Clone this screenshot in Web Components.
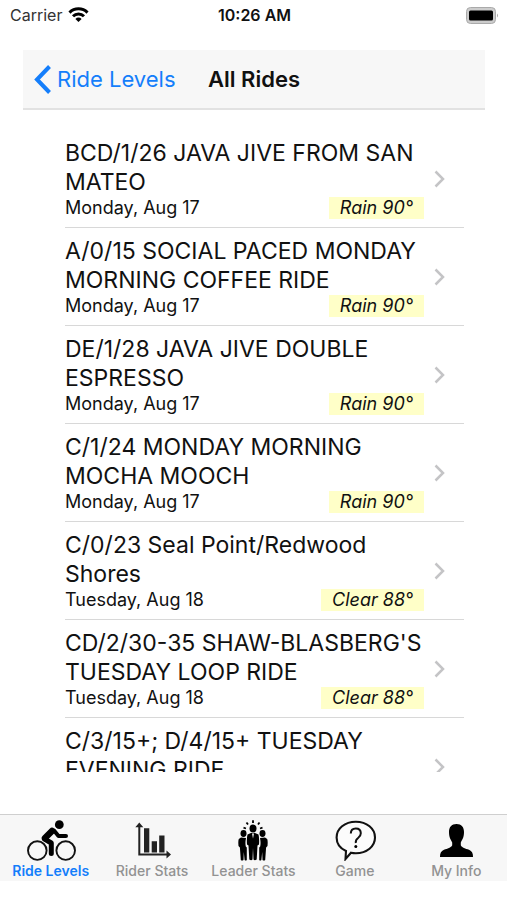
<!DOCTYPE html>
<html lang="en">
<head>
<meta charset="utf-8">
<meta name="viewport" content="width=device-width, initial-scale=1">
<title>All Rides</title>
<style>
html, body {
    height: 100%;
    margin: 0;
}
body {
    background: #fff;
    color: #111;
    font-family: Inter, Roboto, "Liberation Sans", sans-serif;
}
</style>
</head>
<body>
<ride-app>
    <status-bar slot="status" carrier="Carrier">10:26 AM</status-bar>
    <nav-header slot="header" back="Ride Levels">All Rides</nav-header>
    <ride-item date="Monday, Aug 17" weather="Rain 90°">BCD/1/26 JAVA JIVE FROM SAN MATEO</ride-item>
    <ride-item date="Monday, Aug 17" weather="Rain 90°">A/0/15 SOCIAL PACED MONDAY MORNING COFFEE RIDE</ride-item>
    <ride-item date="Monday, Aug 17" weather="Rain 90°">DE/1/28 JAVA JIVE DOUBLE ESPRESSO</ride-item>
    <ride-item date="Monday, Aug 17" weather="Rain 90°">C/1/24 MONDAY MORNING MOCHA MOOCH</ride-item>
    <ride-item date="Tuesday, Aug 18" weather="Clear 88°">C/0/23 Seal Point/Redwood Shores</ride-item>
    <ride-item date="Tuesday, Aug 18" weather="Clear 88°">CD/2/30-35 SHAW-BLASBERG'S TUESDAY LOOP RIDE</ride-item>
    <ride-item>C/3/15+; D/4/15+ TUESDAY EVENING RIDE</ride-item>
    <tab-bar slot="tabs">
        <tab-item icon="cyclist" active>Ride Levels</tab-item>
        <tab-item icon="chart">Rider Stats</tab-item>
        <tab-item icon="leaders">Leader Stats</tab-item>
        <tab-item icon="game">Game</tab-item>
        <tab-item icon="person">My Info</tab-item>
    </tab-bar>
</ride-app>

<script>
/**
 * Create a template element from a string of markup.
 */
function html(markup) {
    const template = document.createElement('template');
    template.innerHTML = markup;
    return template;
}

/**
 * Base class: attaches the shadow root and clones the template in.
 */
class BaseElement extends HTMLElement {
    constructor() {
        super();
        this.attachShadow({mode: 'open'});
        this.shadowRoot.appendChild(this.constructor.template.content.cloneNode(true));
    }

    // Copy an attribute's value to the element of the same id.
    fill(name) {
        this.shadowRoot.getElementById(name).textContent = this.getAttribute(name) || '';
    }
}

/**
 * Whole screen: status bar, header, scrolling list and tabs.
 */
class RideApp extends BaseElement {
    static template = html(`
<style>
:host {
    display: flex;
    flex-direction: column;
    box-sizing: border-box;
    height: 100vh;
    padding-bottom: 19px;
}
main {
    flex: 1;
    min-height: 0;
    margin: 20px 43px 42px 65px;
    overflow-y: auto;
    scrollbar-width: none;
}
</style>
<slot name="status"></slot>
<slot name="header"></slot>
<main><slot></slot></main>
<slot name="tabs"></slot>
`);
}

class StatusBar extends BaseElement {
    static template = html(`
<style>
:host {
    display: grid;
    grid-template-columns: 1fr auto 1fr;
    align-items: center;
    height: 30px;
    padding: 0 8px 0 10px;
    font-size: 16px;
}
.carrier {
    display: flex;
    align-items: center;
    gap: 6px;
    color: #333;
}
.time {
    font-weight: 600;
}
.battery {
    justify-self: end;
}
svg {
    display: block;
}
</style>
<span class="carrier">
    <span id="carrier"></span>
    <svg width="21" height="16" viewBox="0 0 21 16" fill="none" stroke="#000" stroke-width="3" aria-hidden="true">
        <path d="M1.5 5.6a12.7 12.7 0 0 1 18 0M5 9.2a7.7 7.7 0 0 1 11 0"/>
        <path d="M7.4 11.9a4.4 4.4 0 0 1 6.2 0L10.5 15z" fill="#000" stroke="none"/>
    </svg>
</span>
<span class="time"><slot></slot></span>
<svg class="battery" width="33" height="17" viewBox="0 0 33 17" aria-hidden="true">
    <rect x="0.5" y="0.5" width="29" height="16" rx="4" fill="#ccc" stroke="#aaa"/>
    <rect x="3" y="3.5" width="24" height="10" rx="1.5"/>
    <path d="M31 6.500q2 2 0 4z" fill="#aaa"/>
</svg>
`);

    connectedCallback() {
        this.fill('carrier');
    }
}

class NavHeader extends BaseElement {
    static template = html(`
<style>
:host {
    display: grid;
    grid-template-columns: 1fr auto 1fr;
    align-items: center;
    box-sizing: border-box;
    height: 60px;
    margin: 20px 22px 0 23px;
    padding: 0 11px;
    background: #f7f7f7;
    border-bottom: 2px solid #e2e2e2;
}
button {
    display: flex;
    align-items: center;
    gap: 6px;
    justify-self: start;
    padding: 0;
    border: 0;
    background: none;
    color: #147efb;
    font: inherit;
    font-size: 22px;
    white-space: nowrap;
    cursor: pointer;
}
h1 {
    margin: 0;
    font-size: 22px;
    font-weight: 600;
}
</style>
<button type="button">
    <svg width="17" height="29" viewBox="0 0 17 29" fill="none" stroke="currentColor" stroke-width="4" aria-hidden="true">
        <path d="M15.500 1.500 3 14.500l12.500 13"/>
    </svg>
    <span id="back"></span>
</button>
<h1><slot></slot></h1>
`);

    connectedCallback() {
        this.fill('back');
    }
}

/**
 * One ride in the list. The title is slotted.
 */
class RideItem extends BaseElement {
    static template = html(`
<style>
:host {
    display: block;
    border-bottom: 1px solid #d8d8d8;
}
a {
    display: flex;
    align-items: center;
    gap: 10px;
    padding: 9px 19px 8px 0;
    color: inherit;
    text-decoration: none;
}
.text {
    flex: 1;
    min-width: 0;
}
.title {
    font-size: 23px;
    line-height: 29px;
}
.details {
    display: flex;
    justify-content: space-between;
    height: 22px;
    font-size: 18px;
    line-height: 22px;
}
#weather {
    padding: 0 11px;
    background: #ffffc8;
    font-style: italic;
}
#weather:empty {
    display: none;
}
svg {
    flex: none;
}
</style>
<a href="#ride">
    <div class="text">
        <div class="title"><slot></slot></div>
        <div class="details"><span id="date"></span><span id="weather"></span></div>
    </div>
    <svg width="11" height="18" viewBox="0 0 11 18" fill="none" stroke="#c4c4c6" stroke-width="2.5" aria-hidden="true">
        <path d="m1.500 1.500 7.500 7.500-7.500 7.500"/>
    </svg>
</a>
`);

    connectedCallback() {
        this.fill('date');
        this.fill('weather');
    }
}

class TabBar extends BaseElement {
    static template = html(`
<style>
:host {
    display: block;
    border-top: 1px solid #cfcfcf;
    background: #f7f7f7;
}
nav {
    display: grid;
    grid-template-columns: repeat(5, 1fr);
    height: 66px;
}
</style>
<nav><slot></slot></nav>
`);
}

const ICONS = {
    cyclist: `
        <g fill="none" stroke="#111" stroke-width="1.900">
            <circle cx="12.300" cy="30.600" r="9.300"/>
            <circle cx="40.700" cy="30.600" r="9.300"/>
        </g>
        <circle cx="34.300" cy="4.700" r="4.400"/>
        <g fill="none" stroke="#000" stroke-linecap="round" stroke-linejoin="round">
            <path d="m27 11-7 7" stroke-width="6.500"/>
            <path d="m29 10.500 4.500 5.500h7.500" stroke-width="4"/>
            <path d="m19.500 19 6.800 4v10.500" stroke-width="5"/>
        </g>`,
    chart: `
        <path d="M13.300 5v29.600H42" fill="none" stroke="#222" stroke-width="2"/>
        <path d="m13.300 2.500 4 4.800h-8zM45 34.600l-4.500-4v8z" fill="#222"/>
        <path d="M18 8.300h5.300v24.300H18zM25.700 21.300H31v11.300h-5.300zM33.200 15.600h5.300v17h-5.300z" fill="#222"/>`,
    leaders: `
        <path d="m19 8.500-2.500-.8M21 4.500l-1.500-2M26 3V.3M31 4.500l1.500-2M33 8.500l2.500-.8" fill="none" stroke="#000" stroke-width="1.800"/>
        <ellipse cx="26" cy="8.500" rx="3.500" ry="3.900"/>
        <ellipse cx="16.500" cy="13.500" rx="3" ry="3.400"/>
        <ellipse cx="35.500" cy="13.500" rx="3" ry="3.400"/>
        <path d="M24 13h4l3.500 1.500q1 4 .5 10l-1.500 1-.8 14q-2 1.500-3.200 0L26 28l-.5 11.500q-1.200 1.500-3.200 0l-.8-14-1.500-1q-.5-6 .5-10z"/>
        <path d="m14 17.500 5 .5q-1 5-.2 8.500l1 1V40q-1 1.200-2.200 0l-.8-8-.3 8q-1.500 1.200-2.700 0l-.9-12.500-1.400-1.500q-.5-5 .3-7zM38 17.500l-5 .5q1 5 .2 8.500l-1 1V40q1 1.200 2.200 0l.8-8 .3 8q1.500 1.200 2.700 0l.9-12.500 1.400-1.500q.5-5-.3-7z"/>
        <path d="m25 13.500 1 5 1-5z" fill="#f7f7f7"/>`,
    game: `
        <path d="M26.800 1.800c11 0 19.200 6.800 19.200 15.700S37.800 33.200 26.800 33.200q-2.500 0-4.800-.5l-5.500 6.300.5-8C11 28.300 7.600 23.500 7.600 17.500c0-8.900 8.200-15.700 19.200-15.700z" fill="#fcfcfc" stroke="#111" stroke-width="2.100"/>
        <path d="M21.800 13.500q0-5 5-5t5 4.800q0 2.800-2.700 4.700t-2.300 5" fill="none" stroke="#111" stroke-width="2"/>
        <circle cx="26.800" cy="26.400" r="1.500"/>`,
    person: `
        <path d="M26.500 4c5 0 7.500 3.200 7.500 8 0 6-2 7.500-3.200 10.500v2.700c1.200 2.600 4.700 3.200 8.200 4.600 3.200 1.300 4 3.700 4 7.200H10c0-3.500.8-5.900 4-7.200 3.500-1.400 7-2 8.200-4.600v-2.700C21 19.500 19 18 19 12c0-4.800 2.500-8 7.500-8z"/>`
};

class TabItem extends BaseElement {
    static template = html(`
<style>
:host {
    display: block;
    color: #929292;
}
:host([active]) {
    color: #147efb;
}
a {
    display: flex;
    flex-direction: column;
    align-items: center;
    padding-top: 5px;
    color: inherit;
    font-size: 14px;
    font-weight: 500;
    line-height: 16px;
    text-decoration: none;
    white-space: nowrap;
}
:host([active]) a {
    font-weight: 600;
}
svg {
    display: block;
    margin-bottom: 2px;
    fill: #000;
}
</style>
<a href="#tab">
    <svg width="52" height="41" viewBox="0 0 52 41" aria-hidden="true"></svg>
    <slot></slot>
</a>
`);

    connectedCallback() {
        this.shadowRoot.querySelector('svg').innerHTML = ICONS[this.getAttribute('icon')];
        if (this.hasAttribute('active')) {
            this.shadowRoot.querySelector('a').setAttribute('aria-current', 'page');
        }
    }
}

customElements.define('ride-app', RideApp);
customElements.define('status-bar', StatusBar);
customElements.define('nav-header', NavHeader);
customElements.define('ride-item', RideItem);
customElements.define('tab-bar', TabBar);
customElements.define('tab-item', TabItem);
</script>
</body>
</html>
